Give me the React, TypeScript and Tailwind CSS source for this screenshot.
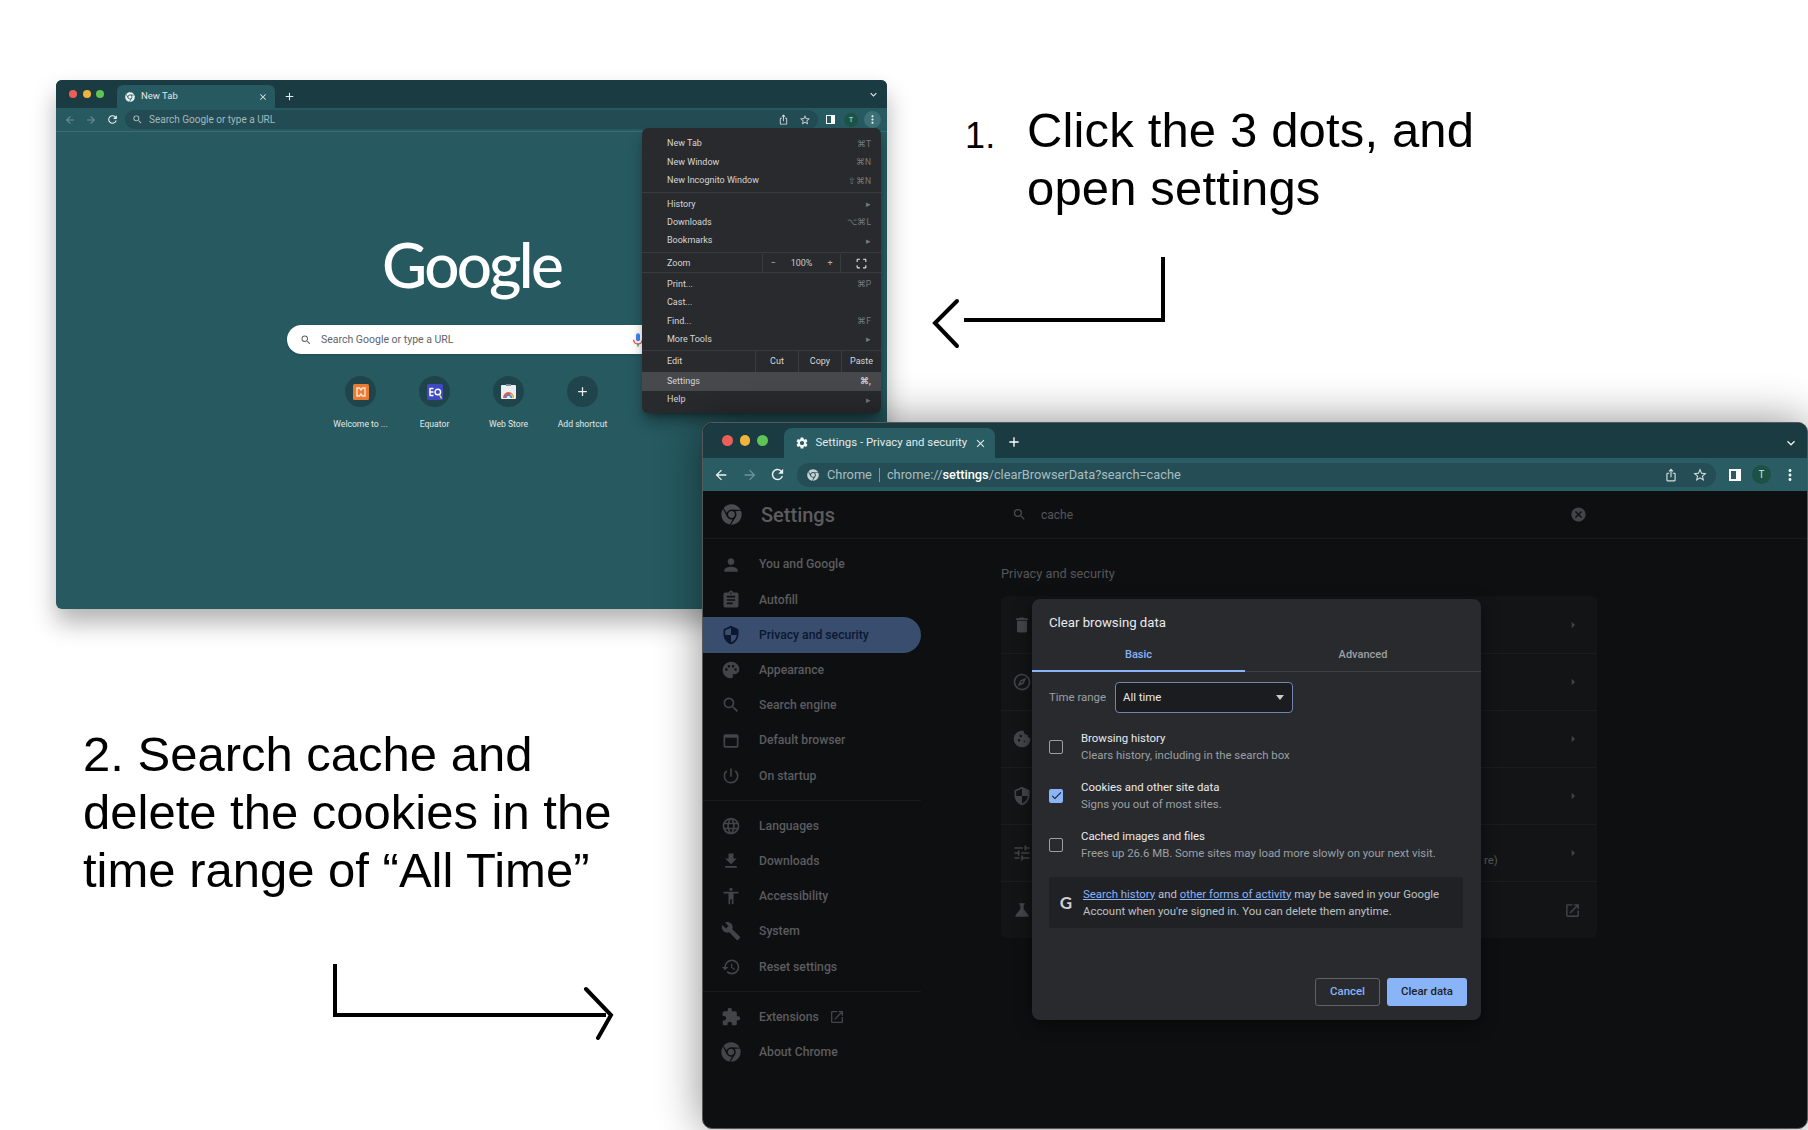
import React from 'react';
import { FaChrome } from 'react-icons/fa';
import {
  MdAccessibility, MdAdd, MdArrowBack, MdArrowForward, MdArrowRight, MdAssignment, MdBuild, MdCancel, MdCheck,
  MdClose, MdCookie, MdCropFree, MdDelete, MdExpandMore, MdExtension, MdFileDownload, MdHistory, MdIosShare,
  MdLanguage, MdMoreVert, MdOpenInNew, MdOutlineExplore, MdOutlineStarBorder, MdPalette, MdPerson,
  MdPowerSettingsNew, MdRefresh, MdScience, MdSearch, MdSecurity, MdSettings, MdTune, MdWebAsset,
} from 'react-icons/md';

type IconType = React.ComponentType<{ className?: string }>;

const menuGroups = [
  [['New Tab', '⌘T'], ['New Window', '⌘N'], ['New Incognito Window', '⇧⌘N']],
  [['History', '▸'], ['Downloads', '⌥⌘L'], ['Bookmarks', '▸']],
  [['Print...', '⌘P'], ['Cast...', ''], ['Find...', '⌘F'], ['More Tools', '▸']],
];

const navTop: [string, IconType][] = [
  ['You and Google', MdPerson],
  ['Autofill', MdAssignment],
  ['Privacy and security', MdSecurity],
  ['Appearance', MdPalette],
  ['Search engine', MdSearch],
  ['Default browser', MdWebAsset],
  ['On startup', MdPowerSettingsNew],
];

const navMiddle: [string, IconType][] = [
  ['Languages', MdLanguage],
  ['Downloads', MdFileDownload],
  ['Accessibility', MdAccessibility],
  ['System', MdBuild],
  ['Reset settings', MdHistory],
];

const cardRows: IconType[] = [MdDelete, MdOutlineExplore, MdCookie, MdSecurity, MdTune, MdScience];

const checkRows = [
  { title: 'Browsing history', sub: 'Clears history, including in the search box', on: false },
  { title: 'Cookies and other site data', sub: 'Signs you out of most sites.', on: true },
  { title: 'Cached images and files', sub: 'Frees up 26.6 MB. Some sites may load more slowly on your next visit.', on: false },
];

const TrafficLights: React.FC<{ big?: boolean }> = ({ big }) => (
  <div className={big ? 'flex gap-[7px] pl-[19px] pt-[12px]' : 'flex gap-[5.5px] pl-[13px] pt-[10px]'}>
    <span className={`rounded-full bg-[#ec5f57] ${big ? 'w-[10.5px] h-[10.5px]' : 'w-[8px] h-[8px]'}`}></span>
    <span className={`rounded-full bg-[#f0b33c] ${big ? 'w-[10.5px] h-[10.5px]' : 'w-[8px] h-[8px]'}`}></span>
    <span className={`rounded-full bg-[#5fc454] ${big ? 'w-[10.5px] h-[10.5px]' : 'w-[8px] h-[8px]'}`}></span>
  </div>
);

const MicIcon = () => (
  <svg viewBox="0 0 24 24" className="w-[16px] h-[16px]">
    <rect x="9" y="2" width="6" height="12" rx="3" fill="#4285f4" />
    <path d="M5.5 11.5a6.5 6.5 0 0 0 13 0" fill="none" stroke="#ea4335" strokeWidth="2" />
    <rect x="11" y="18" width="2" height="4" fill="#34a853" />
  </svg>
);

const Shortcut: React.FC<{ label: string; children: React.ReactNode }> = ({ label, children }) => (
  <div className="w-[74px] flex flex-col items-center">
    <div className="w-[31px] h-[31px] rounded-full bg-[#1f444b] flex items-center justify-center">{children}</div>
    <span className="mt-[10px] text-[8.6px] leading-[14px] text-[#e3eaeb] whitespace-nowrap">{label}</span>
  </div>
);

const ChromeMenu = () => (
  <div className="absolute left-[586px] top-[48px] w-[239px] h-[285px] pt-[7px] rounded-[6px] bg-[#292a2d] text-[#d5d7da] text-[9px] shadow-lg shadow-black/40">
    <div className="border-b border-[#3a3b3e] pb-[2px] mb-[2px]">
      {menuGroups[0].map(([label, right]) => (
        <div key={label} className="h-[18.4px] pl-[25px] pr-[10px] flex items-center justify-between">
          <span>{label}</span>
          <span className="text-[#77797d] text-[8.5px]">{right}</span>
        </div>
      ))}
    </div>
    <div className="border-b border-[#3a3b3e] pb-[2px] mb-[1px]">
      {menuGroups[1].map(([label, right]) => (
        <div key={label} className="h-[18.4px] pl-[25px] pr-[10px] flex items-center justify-between">
          <span>{label}</span>
          <span className="text-[#77797d] text-[8.5px]">{right}</span>
        </div>
      ))}
    </div>
    <div className="h-[19px] flex items-center border-b border-[#3a3b3e] mb-[2px]">
      <span className="pl-[25px] w-[120px]">Zoom</span>
      <div className="h-full w-[79px] border-x border-[#3a3b3e] flex items-center justify-around text-[#aeb0b3]">
        <span>−</span>
        <span className="text-[#c7c9cc]">100%</span>
        <span>+</span>
      </div>
      <div className="flex-1 flex justify-center">
        <MdCropFree className="w-[13px] h-[13px] text-[#e4e5e7]" />
      </div>
    </div>
    <div className="border-b border-[#3a3b3e] pb-[1.5px]">
      {menuGroups[2].map(([label, right]) => (
        <div key={label} className="h-[18.4px] pl-[25px] pr-[10px] flex items-center justify-between">
          <span>{label}</span>
          <span className="text-[#77797d] text-[8.5px]">{right}</span>
        </div>
      ))}
    </div>
    <div className="h-[21px] flex items-center">
      <span className="pl-[25px] w-[113px]">Edit</span>
      <span className="h-full w-[43px] border-l border-[#3a3b3e] flex items-center justify-center">Cut</span>
      <span className="h-full w-[43px] border-l border-[#3a3b3e] flex items-center justify-center">Copy</span>
      <span className="h-full flex-1 border-l border-[#3a3b3e] flex items-center justify-center">Paste</span>
    </div>
    <div className="h-[18.5px] pl-[25px] pr-[10px] flex items-center justify-between bg-[#48494c]">
      <span>Settings</span>
      <span className="text-[#c5c7ca] text-[9px] font-bold">⌘,</span>
    </div>
    <div className="h-[18.5px] pl-[25px] pr-[10px] flex items-center justify-between">
      <span>Help</span>
      <span className="text-[#77797d] text-[8.5px]">▸</span>
    </div>
  </div>
);

const NewTabWindow = () => (
  <div className="absolute left-[56px] top-[80px] w-[831px] h-[529px] rounded-[6px] overflow-hidden bg-[#265960] shadow-[0_14px_24px_rgba(0,0,0,0.3)] font-['Roboto',sans-serif]">
    <div className="h-[28px] bg-[#193b41] flex">
      <TrafficLights />
      <div className="ml-[13px] mt-[5px] w-[158px] rounded-t-[6px] bg-[#265960] flex items-center pl-[8px] pr-[7px] text-[#e0e7e8] text-[9.5px]">
        <FaChrome className="w-[10px] h-[10px] text-[#eef2f2]" />
        <span className="ml-[6px] flex-1">New Tab</span>
        <MdClose className="w-[10px] h-[10px]" />
      </div>
      <MdAdd className="ml-[8px] mt-[10px] w-[13px] h-[13px] text-[#e6ecec]" />
      <MdExpandMore className="ml-auto mr-[7px] mt-[8px] w-[13px] h-[13px] text-[#e6ecec]" />
    </div>
    <div className="h-[24px] border-b border-[#3b6d74] flex items-center pl-[8px] pr-[6px]">
      <MdArrowBack className="w-[12px] h-[12px] text-[#6c9096]" />
      <MdArrowForward className="ml-[9px] w-[12px] h-[12px] text-[#6c9096]" />
      <MdRefresh className="ml-[9px] w-[13px] h-[13px] text-[#eef2f2]" />
      <div className="ml-[6px] flex-1 h-[19px] rounded-full bg-[#224b53] flex items-center pl-[7px] pr-[7px] text-[#a4babd] text-[10px]">
        <MdSearch className="w-[11px] h-[11px] text-[#b8c8ca]" />
        <span className="ml-[6px] flex-1">Search Google or type a URL</span>
        <MdIosShare className="w-[11px] h-[11px] text-[#d3dcdd]" />
        <MdOutlineStarBorder className="ml-[10px] w-[12px] h-[12px] text-[#d3dcdd]" />
      </div>
      <div className="ml-[8px] w-[9px] h-[9px] border-[1.5px] border-white bg-white flex">
        <span className="w-[4px] bg-[#265960]"></span>
      </div>
      <span className="ml-[9px] w-[14px] h-[14px] rounded-full bg-[#1d5246] text-[#cfe2dc] text-[7.5px] flex items-center justify-center">T</span>
      <span className="ml-[6px] w-[17px] h-[17px] rounded-full bg-[#3d6f76] flex items-center justify-center">
        <MdMoreVert className="w-[13px] h-[13px] text-[#e9eeee]" />
      </span>
    </div>
    <div className="flex flex-col items-center">
      <span className="mt-[100px] h-[64px] text-white text-[62px] leading-[64px] tracking-[-2.7px] font-medium font-['Lato',sans-serif]">Google</span>
      <div className="mt-[29px] w-[369px] h-[29px] rounded-full bg-white flex items-center pl-[13px] pr-[10px] text-[#5f6368] text-[10.5px] shadow-sm">
        <MdSearch className="w-[12px] h-[12px] text-[#5f6368]" />
        <span className="ml-[9px] flex-1">Search Google or type a URL</span>
        <MicIcon />
      </div>
      <div className="mt-[22px] flex">
        <Shortcut label="Welcome to ...">
          <svg viewBox="0 0 16 16" className="w-[16px] h-[16px]">
            <rect width="16" height="16" rx="1.5" fill="#e97b33" />
            <path d="M4 4h2.5l1.5 2 1.5-2H12v8H9.5L8 10l-1.5 2H4z" fill="none" stroke="#fbe6d6" strokeWidth="1.4" />
          </svg>
        </Shortcut>
        <Shortcut label="Equator">
          <svg viewBox="0 0 16 16" className="w-[16px] h-[16px]">
            <rect width="16" height="16" rx="1.5" fill="#3f49c4" />
            <path d="M2.5 4.5h4M2.5 8h4M2.5 11.5h4M3 4.5v7" stroke="#fff" strokeWidth="1.5" fill="none" />
            <circle cx="10.8" cy="8" r="2.8" fill="none" stroke="#fff" strokeWidth="1.4" />
            <path d="M12.5 10.5l2 4" stroke="#e5dc5a" strokeWidth="1.6" />
          </svg>
        </Shortcut>
        <Shortcut label="Web Store">
          <svg viewBox="0 0 16 16" className="w-[16px] h-[16px]">
            <rect y="1" width="15" height="14" rx="1" fill="#eceff1" />
            <rect x="5" width="5" height="2" fill="#78909c" />
            <path d="M2 14a5.5 6 0 0 1 11 0h-3a2.5 3 0 0 0-5 0z" fill="#e5593f" />
            <path d="M9 9.5a5 5 0 0 1 4 4.5h-3a2.5 2.5 0 0 0-1-2z" fill="#f3c13a" />
            <path d="M4 14a3.5 3.5 0 0 1 7 0H9.5a2 2 0 0 0-4 0z" fill="#4285f4" />
          </svg>
        </Shortcut>
        <Shortcut label="Add shortcut">
          <MdAdd className="w-[15px] h-[15px] text-[#eef2f2]" />
        </Shortcut>
      </div>
    </div>
    <ChromeMenu />
  </div>
);

const NavItem: React.FC<{ label: string; Icon: IconType; active?: boolean; children?: React.ReactNode }> = ({ label, Icon, active, children }) => (
  <div className={`h-[35.2px] flex items-center pl-[18px] rounded-r-full text-[12.2px] font-medium ${active ? 'bg-[#394d6e] text-[#0c1730]' : 'text-[#5b5c5f]'}`}>
    <Icon className={`w-[20px] h-[20px] ${active ? 'text-[#0c1730]' : 'text-[#434447]'}`} />
    <span className="ml-[18px]">{label}</span>
    {children}
  </div>
);

const CheckRow: React.FC<{ title: string; sub: string; on: boolean }> = ({ title, sub, on }) => (
  <div className="h-[49px] flex items-center pl-[17px]">
    {on ? (
      <span className="w-[14px] h-[14px] rounded-[2px] bg-[#8ab4f8] flex items-center justify-center">
        <MdCheck className="w-[13px] h-[13px] text-[#202124]" />
      </span>
    ) : (
      <span className="w-[14px] h-[14px] rounded-[2px] border-[1.5px] border-[#9aa0a6]"></span>
    )}
    <div className="ml-[18px] leading-[17px] text-[11.4px]">
      <div className="text-[#e8eaed]">{title}</div>
      <div className="text-[#9aa0a6]">{sub}</div>
    </div>
  </div>
);

const ClearDataDialog = () => (
  <div className="absolute left-[329px] top-[108px] w-[449px] h-[421px] rounded-[8px] bg-[#292a2d] shadow-[0_4px_16px_rgba(0,0,0,0.5)] flex flex-col">
    <div className="h-[48px] pl-[17px] flex items-center text-[13.2px] text-[#e8eaed]">Clear browsing data</div>
    <div className="h-[25px] flex border-b border-[#3f4043] text-[11px] font-medium">
      <div className="w-[213px] h-[25px] border-b-[2px] border-[#8ab4f8] text-[#8ab4f8] text-center">Basic</div>
      <div className="flex-1 text-[#9aa0a6] text-center">Advanced</div>
    </div>
    <div className="mt-[10px] pl-[17px] flex items-center">
      <span className="w-[66px] text-[11.4px] text-[#9aa0a6]">Time range</span>
      <div className="w-[178px] h-[31px] rounded-[4px] border-[1.5px] border-[#7285ad] bg-[#1b1c1f] pl-[7px] pr-[8px] flex items-center justify-between text-[11.4px] text-[#e8eaed]">
        <span>All time</span>
        <span className="w-0 h-0 border-x-[4px] border-x-transparent border-t-[5px] border-t-[#c8cacd]"></span>
      </div>
    </div>
    <div className="mt-[9px]">
      {checkRows.map(r => (
        <CheckRow key={r.title} {...r} />
      ))}
    </div>
    <div className="mt-[8px] mx-[17px] h-[51px] w-[414px] rounded-[3px] bg-[#202124] flex items-center pl-[8px] text-[11.4px] leading-[17px] text-[#bdc1c6]">
      <span className="w-[18px] text-center text-[#cfd1d4] text-[17px] font-bold font-['Lato',sans-serif]">G</span>
      <div className="ml-[8px]">
        <div><span className="text-[#8ab4f8] underline">Search history</span> and <span className="text-[#8ab4f8] underline">other forms of activity</span> may be saved in your Google</div>
        <div>Account when you're signed in. You can delete them anytime.</div>
      </div>
    </div>
    <div className="mt-auto mb-[14px] mr-[14px] flex justify-end gap-[7px] text-[11.4px] font-medium">
      <span className="w-[65px] h-[28px] rounded-[3px] border border-[#5f6368] text-[#8ab4f8] flex items-center justify-center">Cancel</span>
      <span className="w-[80px] h-[28px] rounded-[3px] bg-[#8ab4f8] text-[#202124] flex items-center justify-center">Clear data</span>
    </div>
  </div>
);

const SettingsWindow = () => (
  <div className="absolute left-[702px] top-[422px] w-[1106px] h-[707px] rounded-[10px] overflow-hidden border border-[#56595b] bg-[#0e0f11] shadow-[0_0_45px_rgba(0,0,0,0.45)] font-['Roboto',sans-serif]">
    <div className="h-[35px] bg-[#193b41] flex">
      <TrafficLights big />
      <div className="ml-[16px] mt-[5px] w-[211px] rounded-t-[8px] bg-[#2a5c63] flex items-center pl-[11px] pr-[8px] text-[#e4eaeb] text-[11.4px]">
        <MdSettings className="w-[14px] h-[14px] text-[#f2f4f4]" />
        <span className="ml-[7px] flex-1 whitespace-nowrap">Settings - Privacy and security</span>
        <MdClose className="w-[13px] h-[13px]" />
      </div>
      <MdAdd className="ml-[11px] mt-[11px] w-[16px] h-[16px] text-white" />
      <MdExpandMore className="ml-auto mr-[8px] mt-[12px] w-[16px] h-[16px] text-[#e6ecec]" />
    </div>
    <div className="h-[33px] bg-[#2a5c63] flex items-center pl-[10px] pr-[6px]">
      <MdArrowBack className="w-[16px] h-[16px] text-[#eef2f2]" />
      <MdArrowForward className="ml-[13px] w-[16px] h-[16px] text-[#6f9298]" />
      <MdRefresh className="ml-[11px] w-[17px] h-[17px] text-[#eef2f2]" />
      <div className="ml-[11px] w-[919px] h-[24px] rounded-full bg-[#244d55] flex items-center pl-[10px] pr-[8px] text-[12.8px] text-[#a9bdc0]">
        <FaChrome className="w-[12px] h-[12px] text-[#c5d2d4]" />
        <span className="ml-[8px]">Chrome</span>
        <span className="mx-[7px] w-px h-[14px] bg-[#7d979b]"></span>
        <span>chrome://<span className="text-white font-medium">settings</span>/clearBrowserData?search=cache</span>
        <MdIosShare className="ml-auto mr-[3px] w-[14px] h-[14px] text-[#d3dcdd]" />
        <MdOutlineStarBorder className="ml-[11px] w-[16px] h-[16px] text-[#d3dcdd]" />
      </div>
      <div className="ml-[13px] w-[12px] h-[12px] border-[2px] border-white bg-white flex">
        <span className="w-[5px] bg-[#2a5c63]"></span>
      </div>
      <span className="ml-[11px] w-[19px] h-[19px] rounded-full bg-[#1c5246] text-[#cfe2dc] text-[10px] flex items-center justify-center">T</span>
      <MdMoreVert className="ml-[10px] w-[18px] h-[18px] text-[#eef2f2]" />
    </div>
    <div className="relative h-[638px]">
      <div className="h-[48px] border-b border-[#191a1c] flex items-center">
        <div className="w-[295px] pl-[18px] flex items-center">
          <FaChrome className="w-[21px] h-[21px] text-[#4b4c4f]" />
          <span className="ml-[19px] text-[20px] font-medium text-[#5b5c5f]">Settings</span>
        </div>
        <div className="w-[600px] flex items-center pl-[14px] pr-[11px] text-[#55565a] text-[12px]">
          <MdSearch className="w-[15px] h-[15px] text-[#4a4b4e]" />
          <span className="ml-[14px] flex-1">cache</span>
          <MdCancel className="w-[17px] h-[17px] text-[#434447]" />
        </div>
      </div>
      <div className="flex">
        <div className="w-[218px] pt-[8px]">
          {navTop.map(([label, Icon]) => (
            <NavItem key={label} label={label} Icon={Icon} active={label === 'Privacy and security'} />
          ))}
          <div className="my-[7px] border-t border-[#191a1c]"></div>
          {navMiddle.map(([label, Icon]) => (
            <NavItem key={label} label={label} Icon={Icon} />
          ))}
          <div className="my-[7px] border-t border-[#191a1c]"></div>
          <NavItem label="Extensions" Icon={MdExtension}>
            <MdOpenInNew className="ml-[10px] w-[16px] h-[16px] text-[#434447]" />
          </NavItem>
          <NavItem label="About Chrome" Icon={FaChrome} />
        </div>
        <div className="ml-[80px] w-[596px] text-[#55565a]">
          <div className="h-[57px] pt-[25px] text-[12.8px]">Privacy and security</div>
          <div className="rounded-[6px] bg-[#131416]">
            {cardRows.map((Icon, i) => (
              <div key={i} className={`h-[57px] flex items-center pl-[11px] pr-[16px] ${i > 0 ? 'border-t border-[#1b1c1e]' : ''}`}>
                <Icon className="w-[20px] h-[20px] text-[#434447]" />
                {i === 4 && <span className="ml-[452px] mt-[16px] text-[11.4px]">re)</span>}
                {i < 5 ? (
                  <MdArrowRight className="ml-auto w-[16px] h-[16px] text-[#434447]" />
                ) : (
                  <MdOpenInNew className="ml-auto w-[17px] h-[17px] text-[#434447]" />
                )}
              </div>
            ))}
          </div>
        </div>
      </div>
      <ClearDataDialog />
    </div>
  </div>
);

const App = () => (
  <div className="relative w-[1808px] h-[1130px] overflow-hidden bg-white text-black font-['Liberation_Sans',sans-serif]">
    <NewTabWindow />
    <SettingsWindow />

    <div className="absolute left-[965px] top-[101px] flex text-[49px] leading-[58px] tracking-[0.15px]">
      <span className="w-[62px] text-[36px] pt-[6px]">1.</span>
      <span>Click the 3 dots, and<br />open settings</span>
    </div>
    <div className="absolute left-[83px] top-[725px] text-[49px] leading-[58px]">
      2. Search cache and<br />delete the cookies in the<br />time range of “All Time”
    </div>

    <svg className="absolute left-[925px] top-[250px]" width="250" height="105" viewBox="925 250 250 105" fill="none" stroke="#000" strokeWidth="4">
      <path d="M1163 257V320H964" />
      <path d="M957 301L935 323L957 346" strokeLinecap="round" />
    </svg>
    <svg className="absolute left-[325px] top-[955px]" width="300" height="95" viewBox="325 955 300 95" fill="none" stroke="#000" strokeWidth="4">
      <path d="M335 964V1015H606" />
      <path d="M586 989L611 1015L598 1038" strokeLinecap="round" />
    </svg>
  </div>
);

export default App;
